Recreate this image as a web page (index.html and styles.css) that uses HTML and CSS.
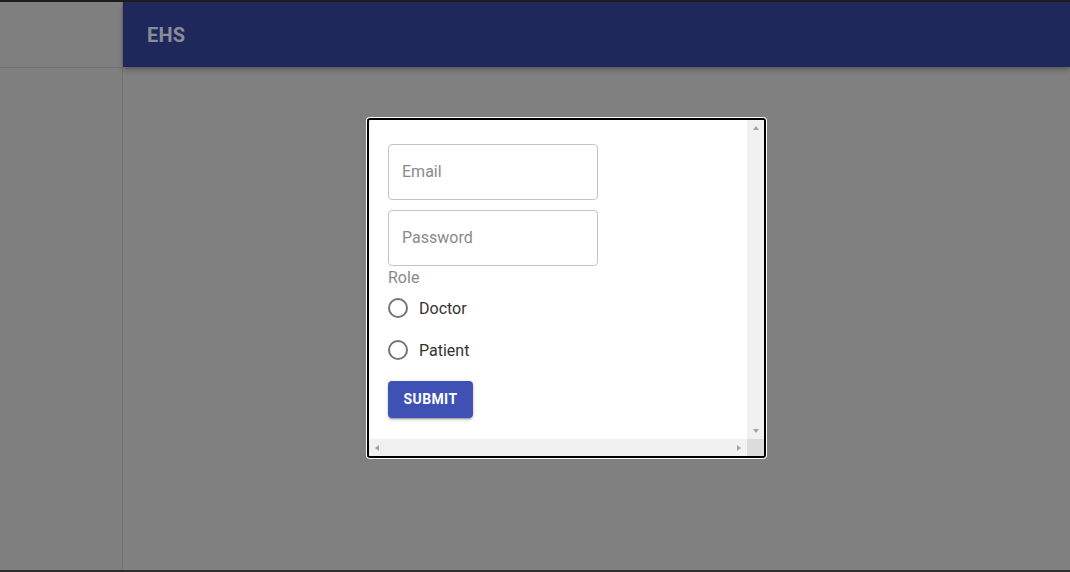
FILE: index.html
```html
<!DOCTYPE html>
<html>
<head>
<meta charset="utf-8">
<link rel="stylesheet" href="styles.css">
</head>
<body>
<div class="frame">
  <div class="topstrip"></div>
  <div class="app">
    <aside class="drawer">
      <div class="drawer-head"></div>
    </aside>
    <main class="main">
      <header class="appbar"><h1 class="title">EHS</h1></header>
      <section class="content">
        <div class="dialog">
          <div class="viewport">
            <form class="form">
              <div class="field"><span class="placeholder">Email</span></div>
              <div class="field"><span class="placeholder">Password</span></div>
              <div class="label">Role</div>
              <div class="radio-row"><span class="radio"></span><span class="radio-text">Doctor</span></div>
              <div class="radio-row"><span class="radio"></span><span class="radio-text">Patient</span></div>
              <button type="button" class="submit">Submit</button>
            </form>
          </div>
          <div class="vscroll">
            <span class="arrow up"></span>
            <span class="arrow down"></span>
          </div>
          <div class="hscroll">
            <span class="arrow left"></span>
            <span class="arrow right"></span>
          </div>
          <div class="corner"></div>
        </div>
      </section>
    </main>
  </div>
  <div class="bottomstrip"></div>
</div>
</body>
</html>
```
FILE: styles.css
```css
html, body {
  margin: 0;
  padding: 0;
  background: #808080;
  font-family: Roboto, "Liberation Sans", sans-serif;
}
.frame {
  width: 1070px;
  height: 572px;
  display: flex;
  flex-direction: column;
  overflow: hidden;
}
.topstrip {
  height: 2px;
  background: #1c1c1c;
  flex: none;
}
.bottomstrip {
  height: 2px;
  background: #2e2e2e;
  flex: none;
}
.app {
  flex: 1;
  display: flex;
  min-height: 0;
}
.drawer {
  width: 122px;
  flex: none;
  border-right: 1px solid #727272;
  background: #7f7f7f;
}
.drawer-head {
  height: 65px;
  border-bottom: 1px solid #727272;
}
.main {
  flex: 1;
  display: flex;
  flex-direction: column;
  min-width: 0;
}
.appbar {
  height: 65px;
  flex: none;
  background: #1f285b;
  display: flex;
  align-items: center;
  padding-left: 24px;
  box-shadow: 0 2px 4px -1px rgba(0,0,0,0.25), 0 4px 5px 0 rgba(0,0,0,0.15);
  position: relative;
  z-index: 1;
}
.title {
  margin: 0;
  font-size: 20px;
  font-weight: 700;
  color: #8a8c9a;
  letter-spacing: 0.2px;
}
.content {
  flex: 1;
}
.dialog {
  margin-left: 244px;
  margin-top: 51px;
  width: 395px;
  height: 336px;
  border: 2px solid #000;
  border-radius: 3px;
  box-shadow: 0 0 0 1px #fff;
  background: #fff;
  display: grid;
  grid-template-columns: 1fr 17px;
  grid-template-rows: 1fr 17px;
  overflow: hidden;
}
.viewport {
  padding: 24px 0 0 19px;
  overflow: hidden;
}
.form {
  display: flex;
  flex-direction: column;
  align-items: flex-start;
}
.field {
  width: 210px;
  height: 56px;
  box-sizing: border-box;
  border: 1px solid #c4c4c4;
  border-radius: 4px;
  display: flex;
  align-items: center;
  padding: 0 0 2px 13px;
  margin-bottom: 10px;
}
.field + .field {
  margin-bottom: 3px;
}
.placeholder {
  font-size: 16px;
  color: #8a8a8a;
}
.label {
  font-size: 16px;
  color: #8a8a8a;
  line-height: 18px;
}
.radio-row {
  height: 42px;
  display: flex;
  align-items: center;
}
.radio {
  width: 16px;
  height: 16px;
  border: 2px solid #757575;
  border-radius: 50%;
  margin-right: 11px;
}
.radio-text {
  font-size: 16px;
  color: #333;
}
.submit {
  margin-top: 10px;
  width: 85px;
  height: 37px;
  border: none;
  border-radius: 4px;
  background: #3f51b5;
  color: #fff;
  font-family: Roboto, "Liberation Sans", sans-serif;
  font-size: 14px;
  font-weight: 700;
  text-transform: uppercase;
  letter-spacing: 0.4px;
  box-shadow: 0 3px 1px -2px rgba(0,0,0,0.2), 0 2px 2px 0 rgba(0,0,0,0.14), 0 1px 5px 0 rgba(0,0,0,0.12);
  padding: 0 0 2px;
}
.vscroll {
  background: #f1f1f1;
  display: flex;
  flex-direction: column;
  justify-content: space-between;
  align-items: center;
  padding: 6px 0 6px;
}
.hscroll {
  background: #f1f1f1;
  display: flex;
  justify-content: space-between;
  align-items: center;
  padding: 0 6px;
}
.corner {
  background: #dcdcdc;
}
.arrow {
  width: 0;
  height: 0;
  border: 3px solid transparent;
}
.arrow.up {
  border-top: none;
  border-bottom: 4px solid #a3a3a3;
}
.arrow.down {
  border-bottom: none;
  border-top: 4px solid #a3a3a3;
}
.arrow.left {
  border-left: none;
  border-right: 4px solid #a3a3a3;
}
.arrow.right {
  border-right: none;
  border-left: 4px solid #a3a3a3;
}
```
